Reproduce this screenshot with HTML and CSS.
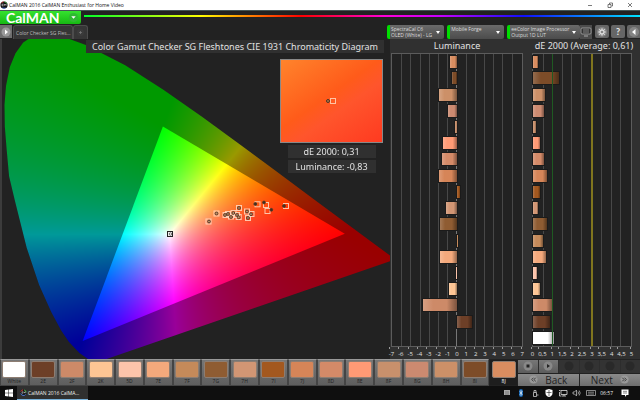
FILE: index.html
```html
<!DOCTYPE html>
<html lang="en">
<head>
<meta charset="utf-8">
<title>CalMAN 2016 CalMAN Enthusiast for Home Video</title>
<link rel="stylesheet" href="styles.css">
</head>
<body>
<div class="titlebar">
  <svg class="app-icon" viewBox="0 0 10 10"><circle cx="5" cy="5" r="4.5" fill="#111"/><path d="M1.5 3a4 4 0 0 1 3-2" stroke="#d33" fill="none"/><path d="M5.500 1a4 4 0 0 1 3 2.500" stroke="#4b4" fill="none"/><path d="M3 8.500a4 4 0 0 0 4 0" stroke="#36d" fill="none"/><path d="M4.500 4H2.500v2h2M5.500 6V4l1 1 1-1v2" stroke="#ddd" stroke-width=".8" fill="none"/></svg>
  <span class="window-name">CalMAN 2016 CalMAN Enthusiast for Home Video</span>
  <button class="win-btn" aria-label="Minimize"><svg viewBox="0 0 6 6"><path d="M1 3.500h4"/></svg></button>
  <button class="win-btn" aria-label="Restore"><svg viewBox="0 0 6 6"><path d="M1 2.500h3v3H1zM2.500 2V1H5.500v3H4.500"/></svg></button>
  <button class="win-btn" aria-label="Close"><svg viewBox="0 0 6 6"><path d="M1 1l4 4M5 1L1 5"/></svg></button>
</div>
<div class="brandbar">
  <button class="brand">CalMAN<span class="brand-drop"><svg viewBox="0 0 10 10"><circle cx="5" cy="5" r="5" fill="#2fb832"/><path d="M2.500 3.500h5L5 6.500z" fill="#fff"/></svg></span></button>
  <div class="spectrum"></div>
</div>
<div class="toolbar">
  <div class="tabs">
    <button class="nav" aria-label="Expand"><svg viewBox="0 0 10 10"><circle cx="5" cy="5" r="4.500" fill="#9a9a9a"/><path d="M4 2.500L7 5 4 7.500z" fill="#fff"/></svg></button>
    <button class="tab">Color Checker SG Fles...</button>
    <button class="tab add" aria-label="Add tab"><svg viewBox="0 0 10 10"><circle cx="5" cy="5" r="4" fill="#3b3b3b"/><path d="M5 3.500v3M3.500 5h3" stroke="#777"/></svg></button>
  </div>
  <div class="sources">
    <button class="source"><span>SpectraCal C6<br>OLED (White) - LG</span><i></i></button>
    <button class="source"><span>Mobile Forge</span><i></i></button>
    <button class="source wide"><span>eeColor Image Processor<br>Output 1D LUT</span><i></i></button>
    <button class="screen" aria-label="Display"><svg viewBox="0 0 12 10"><rect x="1" y="1" width="10" height="6" rx="1" fill="#333" stroke="#aaa" stroke-width=".8"/><path d="M3 3h6M3 5h6" stroke="#888"/><path d="M4 9h4" stroke="#aaa"/></svg></button>
    <button class="round" aria-label="Settings"><svg viewBox="0 0 12 12"><circle cx="6" cy="6" r="5" fill="#858585"/><circle cx="6" cy="6" r="2" fill="none" stroke="#ddd" stroke-width="1.300"/><path d="M6 2v2M6 8v2M2 6h2M8 6h2M3 3l1.500 1.500M7.500 7.500L9 9M9 3L7.500 4.500M4.500 7.500L3 9" stroke="#ddd" stroke-width=".8"/></svg></button>
    <button class="round help">?</button>
    <button class="round" aria-label="Collapse"><svg viewBox="0 0 12 12"><circle cx="6" cy="6" r="5" fill="#858585"/><path d="M7.500 3v6L4 6z" fill="#fff"/></svg></button>
  </div>
</div>
<main class="workspace">
  <section class="stage">
    <canvas id="gamut" width="390" height="320"></canvas>
    <svg id="marks" class="marks" viewBox="0 39 390 320" preserveAspectRatio="none"></svg>
    <h1 class="stage-title">Color Gamut Checker SG Fleshtones CIE 1931 Chromaticity Diagram</h1>
    <div class="detail">
      <div class="patch"><svg viewBox="0 0 14 8"><rect x="5.500" y="1.500" width="5" height="5" fill="none" stroke="#ffc3a4"/><circle cx="3" cy="4" r="1.500" fill="#b5784a" stroke="#4c3524"/></svg></div>
      <p>dE 2000: 0,31</p>
      <p>Luminance: -0,83</p>
    </div>
  </section>
  <section class="charts">
    <div class="chart lum">
      <h2>Luminance</h2>
      <div class="plot" id="lum"></div>
      <div class="axis" id="lum-axis"></div>
    </div>
    <div class="chart de">
      <h2>dE 2000 (Average: 0,61)</h2>
      <div class="plot" id="de"></div>
      <div class="axis" id="de-axis"></div>
    </div>
  </section>
</main>
<div class="bottom">
  <div class="swatches" id="swatches"></div>
  <div class="controls">
    <div class="transport">
      <button class="live" aria-label="Stop"><svg viewBox="0 0 10 10"><circle cx="5" cy="5" r="4.500" fill="#888"/><path d="M3.500 3.500h3v3h-3z" fill="#222"/></svg></button>
      <button class="live" aria-label="Play"><svg viewBox="0 0 10 10"><circle cx="5" cy="5" r="4.500" fill="#888"/><path d="M4 3l3 2-3 2z" fill="#222"/></svg></button>
      <button aria-label="Read"><svg viewBox="0 0 10 10"><circle cx="5" cy="5" r="4.500"/></svg></button>
      <button aria-label="Read series"><svg viewBox="0 0 10 10"><circle cx="5" cy="5" r="4.500"/></svg></button>
      <button aria-label="Continuous"><svg viewBox="0 0 10 10"><circle cx="5" cy="5" r="4.500"/></svg></button>
      <button aria-label="Loop"><svg viewBox="0 0 10 10"><circle cx="5" cy="5" r="4.500"/></svg></button>
    </div>
    <div class="steps">
      <button><svg viewBox="0 0 10 10"><circle cx="5" cy="5" r="4.500" fill="#999"/><path d="M5 3L3 5l2 2M7.500 3l-2 2 2 2" fill="none" stroke="#333"/></svg>Back</button>
      <button>Next<svg viewBox="0 0 10 10"><circle cx="5" cy="5" r="4.500" fill="#999"/><path d="M2.500 3l2 2-2 2M5 3l2 2-2 2" fill="none" stroke="#333"/></svg></button>
    </div>
  </div>
</div>
<footer class="taskbar">
  <button class="start" aria-label="Start"><svg viewBox="0 0 8 8"><path d="M0 1l3.500-.5v3.200H0zM4 .5L8 0v3.700H4zM0 4.200h3.500v3.300L0 7zM4 4.200h4V8l-4-.5z" fill="#fff"/></svg></button>
  <button class="task"><svg viewBox="0 0 8 8"><circle cx="4" cy="4" r="3.500" fill="#111"/><path d="M1 3a3 3 0 0 1 2.500-2" stroke="#e44" fill="none"/><path d="M4.500 1A3 3 0 0 1 7 4" stroke="#5c5" fill="none"/><path d="M1 5a3 3 0 0 0 5.500 1" stroke="#58e" fill="none"/><path d="M3.500 3.200H2.300v1.600h1.200M4.500 4.800V3.200l.7.800.7-.8v1.600" stroke="#eee" stroke-width=".6" fill="none"/></svg>CalMAN 2016 CalMA...</button>
  <div class="tray">
    <svg viewBox="0 0 10 8"><rect x="2" y="1" width="6" height="5" fill="#aaa"/><path d="M3 3h4M3 5h4" stroke="#555" stroke-width=".6"/></svg>
    <svg viewBox="0 0 10 8"><rect x="3" y="0" width="4" height="8" rx="2" fill="#1767b5"/><path d="M3.800 2.500l2.300 2.800L5 6.500v-5l1.100 1.200-2.300 2.800" stroke="#fff" stroke-width=".6" fill="none"/></svg>
    <svg viewBox="0 0 10 8"><path d="M3.500 3.500h3v4h-3zM4 3.500v-2h2v2M7 6h1.500" stroke="#ccc" fill="none" stroke-width=".8"/></svg>
    <svg viewBox="0 0 10 8"><path d="M5 0l3.500 1v3q0 3-3.500 4-3.500-1-3.500-4V1z" fill="#fff"/><path d="M5 1v6M2.500 3.500h5" stroke="#222" stroke-width=".6"/></svg>
    <svg viewBox="0 0 10 8"><path d="M3 1.500h6v4H3zM6 5.500v1.500M4 7h4M1.500 3v4h2M1 1.500h1.500" stroke="#ddd" fill="none" stroke-width=".8"/></svg>
    <svg viewBox="0 0 10 8"><path d="M1 3h1.500l2-2v6l-2-2H1zM6 2.500q1 1.500 0 3M7.200 1.500q2 2.500 0 5" stroke="#ccc" fill="none" stroke-width=".7"/></svg>
    <svg viewBox="0 0 10 8"><path d="M.5 1.500h9v5h-9zM2 3.200h6M2 5h6" stroke="#bbb" fill="none" stroke-width=".7"/></svg>
    <time>06:57</time>
    <svg viewBox="0 0 10 8"><path d="M1.500.5h7v5.500H6.500L5 8V6H1.500z" fill="#fff"/><path d="M3 2.300h4M3 4h4" stroke="#333" stroke-width=".6"/></svg>
  </div>
</footer>
<script src="app.js"></script>
</body>
</html>
```

FILE: styles.css
```css
* { box-sizing: border-box; }
body {
  margin: 0;
  height: 100vh;
  display: flex;
  flex-direction: column;
  background: #222;
  color: #e2e2e2;
  font-family: "Open Sans", "Liberation Sans", sans-serif;
  overflow: hidden;
}
button { border: 0; padding: 0; margin: 0; font: inherit; color: inherit; background: none; }
svg { display: block; }
h1, h2, p { margin: 0; font-weight: 400; font-family: "Noto Sans", sans-serif; }

.titlebar { flex: none; height: 10px; display: flex; align-items: center; background: #fff; color: #111; }
.app-icon { width: 8px; height: 8px; }
.window-name { flex: 1; font-size: 5px; line-height: 10px; padding-left: 1px; white-space: nowrap; }
.win-btn { width: 20px; display: flex; justify-content: center; }
.win-btn svg { width: 6px; height: 6px; fill: none; stroke: #444; stroke-width: 0.7; }

.brandbar { flex: none; height: 15px; display: flex; align-items: flex-start; border-top: 1px solid #455; }
.brand {
  width: 81px; height: 13px; padding: 0 3px 0 6px;
  display: flex; align-items: center; justify-content: space-between;
  background: linear-gradient(#35e22f, #17b813); color: #fff;
  font: 700 14px/13px Lato, sans-serif; border-radius: 0 0 2px 0;
}
.brand-drop svg { width: 9px; height: 9px; }
.spectrum {
  flex: 1; height: 2px; margin: 4px 0 0 3px;
  background: linear-gradient(90deg, #00ff2a, #ffff00 21%, #ff0000 39%, #ff00d8 54%, #c800ff 64%, #1010ff 79%, #00e4ff);
}

.toolbar { flex: none; height: 14px; display: grid; grid-template-columns: 384fr 256fr; }
.tabs, .sources { display: flex; min-width: 0; }
.nav { width: 12px; height: 13px; background: #6e6e6e; display: flex; align-items: center; justify-content: center; }
.nav svg { width: 10px; height: 10px; }
.tab { height: 14px; padding: 0 2px; margin-left: 1px; border: 1px solid #4c4c4c; border-bottom: 0; border-radius: 3px 3px 0 0; background: #363636; color: #bbb; font-size: 5px; line-height: 12px; width: 60px; white-space: nowrap; }
.add { width: 15px; margin-left: 0; display: flex; align-items: center; justify-content: center; }
.add svg { width: 9px; height: 9px; }
.sources { padding-left: 3px; gap: 3px; }
.source {
  flex: 57 1 0; min-width: 0; height: 14px; display: flex; align-items: center; justify-content: space-between;
  border-left: 3px solid #0d0; border-radius: 2px; background: linear-gradient(#6a6a6a, #4c4c4c);
  text-align: left; color: #ddd; padding: 0 4px 0 1px; font-size: 5px; line-height: 6px; white-space: nowrap;
}
.source span { align-self: flex-start; padding-top: 1px; }
.source i { border: 2px solid transparent; border-top: 3px solid #fff; border-bottom: 0; flex: none; }
.source.wide { flex: 75 1 0; }
.screen { width: 12px; margin-left: -3px; display: flex; align-items: center; background: #4c4c4c; height: 14px; }
.screen svg { width: 12px; height: 10px; }
.round { width: 14px; height: 13px; border-radius: 2px; background: #666; display: flex; align-items: center; justify-content: center; flex: none; margin-right: -1px; }
.round svg { width: 12px; height: 12px; }
.help { font: 700 9px/12px Lato, sans-serif; color: #eee; }

.workspace { flex: 1; min-height: 0; display: grid; grid-template-columns: 390fr 250fr; }
.stage { position: relative; min-width: 0; min-height: 0; overflow: hidden; border-left: 2px solid #3c3c3c; }
.stage canvas, .marks { position: absolute; inset: 0 0 0 -2px; width: calc(100% + 2px); height: 100%; }
.stage-title { position: absolute; top: 1px; right: 6px; padding: 0 6px; background: #303030; font-size: 9px; line-height: 13px; white-space: nowrap; }
.detail { position: absolute; top: 20px; right: 7px; width: 103px; display: flex; flex-direction: column; align-items: center; gap: 2px; }
.patch { align-self: stretch; height: 84px; border: 1px solid #888; background: linear-gradient(145deg, #ff842c, #ff5b1a 45%, #ff552c 60%, #ff3a20); display: flex; align-items: center; justify-content: center; }
.patch svg { width: 14px; height: 8px; }
.detail p { width: 88px; background: #303030; font-size: 9px; line-height: 13px; text-align: center; white-space: nowrap; }

.charts { min-width: 0; min-height: 0; background: #303030; display: grid; grid-template-columns: 132fr 100fr; gap: 9px; padding: 0 8px 0 1px; }
.chart { min-width: 0; display: flex; flex-direction: column; }
.chart h2 { font-size: 9px; line-height: 14px; text-align: center; white-space: nowrap; }
.de h2 { margin: 0 -6px 0 -2px; }
.plot { flex: 1; min-height: 0; position: relative; background: #222; border: 1px solid #5c5c5c; display: flex; flex-direction: column; }
.rules { position: absolute; inset: 0; display: flex; justify-content: space-between; }
.rules span { width: 1px; background: #484848; }
.rules .edge { visibility: hidden; }
.rules .zero { background: #777; }
.rules .good { position: relative; z-index: 1; background: #1f5a22; }
.rules .limit { width: 2px; background: #80751e; }
.row { flex: 1; display: flex; align-items: center; position: relative; }
.bar { height: 12px; box-shadow: 0 0 0 1px #1b1b1b; flex: none; }
.axis { height: 12px; display: flex; justify-content: space-between; font-size: 6px; line-height: 14px; }
.axis span { width: 1px; display: flex; justify-content: center; white-space: nowrap; }
.axis span::before { content: ""; width: 1px; height: 2px; flex: none; background: #999; margin-right: -1px; }

.bottom { flex: none; height: 27px; display: grid; grid-template-columns: 518fr 122fr; background: #222; }
.swatches { display: flex; min-width: 0; }
.swatch { flex: 1; min-width: 0; display: flex; flex-direction: column; align-items: center; background: linear-gradient(#777, #5e5e5e); border: 1px solid #444; border-top-color: #999; padding-top: 1px; font-size: 5px; line-height: 7px; color: #222; }
.swatch i { width: 24px; height: 17px; border-radius: 2px; border: 1px solid #8d7d72; }
.swatch.active { background: #1e1e1e; color: #fff; border-color: #222; }
.controls { display: flex; flex-direction: column; gap: 1px; padding-top: 1px; min-width: 0; }
.transport { flex: 1; display: flex; gap: 1px; background: #2d2d2d; }
.transport button { flex: 1; display: flex; align-items: center; justify-content: center; background: #333; }
.transport .live { background: linear-gradient(#777, #5c5c5c); }
.transport svg { width: 10px; height: 10px; fill: #292929; }
.steps { flex: 1; display: flex; gap: 1px; }
.steps button { flex: 1; display: flex; align-items: center; justify-content: center; gap: 7px; background: linear-gradient(#8b8b8b, #6e6e6e); color: #222; font-size: 10px; line-height: 12px; }
.steps svg { width: 9px; height: 9px; }

.taskbar { flex: none; height: 14px; display: flex; background: #0f0f0f; color: #eee; font-size: 5px; line-height: 12px; }
.start { width: 17px; display: flex; align-items: center; justify-content: center; }
.start svg { width: 8px; height: 8px; }
.task { width: 71px; display: flex; align-items: center; gap: 1px; padding-left: 3px; background: #303030; border-bottom: 1px solid #79b3dc; white-space: nowrap; }
.task svg { width: 7px; height: 7px; }
.tray { margin-left: auto; display: flex; align-items: center; gap: 4px; padding-right: 10px; }
.tray svg { width: 10px; height: 8px; }
.tray time { margin-right: 3px; }
```

FILE: app.js
```js
const patches = [
  // name, colour, luminance error, dE 2000
  ["8J", "#d98d60", -0.75, 0.28],
  ["8I", "#7d4c28", -0.5, 1.31],
  ["8H", "#cc9068", -1.95, 0.63],
  ["8G", "#cc8a70", -1, 0.58],
  ["8F", "#c8906c", -0.25, 0.17],
  ["8E", "#ff9a75", -1.5, 0.38],
  ["8D", "#d48a68", -1.65, 0.57],
  ["7J", "#d68558", -1.95, 0.72],
  ["7I", "#a3581f", 0.35, 0.38],
  ["7H", "#d29674", -1.2, 0.28],
  ["7G", "#8f5c32", -1.8, 0.7],
  ["7F", "#c58a5a", 0.15, 0.5],
  ["7E", "#f4a97c", -1.8, 0.64],
  ["5D", "#fcc4ab", -0.15, 0.22],
  ["2K", "#fdc594", -0.9, 0.35],
  ["2F", "#cd8a68", -3.65, 0.96],
  ["2E", "#6d3f27", 1.6, 0.86],
  ["White", "#ffffff", 0, 1.08]
];

function buildChart(id, min, max, step, valueIndex) {
  const plot = document.getElementById(id);
  const axis = document.getElementById(id + "-axis");
  let rules = "";
  let labels = "";
  for (let v = min; v <= max; v += step) {
    let cls = "";
    if (v === min || v === max) cls = "edge";
    else if (v === 0) cls = "zero";
    else if (id === "de" && v === 1) cls = "good";
    else if (id === "de" && v === 3) cls = "limit";
    rules += `<span class="${cls}"></span>`;
    labels += `<span>${String(v).replace(".", ",")}</span>`;
  }
  const range = max - min;
  const rows = patches.map(p => {
    const v = p[valueIndex];
    if (v === 0) return `<div class="row"></div>`;
    const left = (Math.min(v, 0) - min) / range * 100;
    const width = Math.abs(v) / range * 100;
    const shade = `linear-gradient(90deg, color-mix(in srgb, ${p[1]}, #fff 18%), ${p[1]} 30%, ${p[1]} 70%, color-mix(in srgb, ${p[1]}, #000 40%))`;
    return `<div class="row"><div class="bar" style="margin-left:${left}%;width:${width}%;background:${shade}"></div></div>`;
  }).join("");
  plot.innerHTML = `<div class="rules">${rules}</div>${rows}`;
  axis.innerHTML = labels;
}
buildChart("lum", -7, 7, 1, 2);
buildChart("de", 0, 5, 0.5, 3);

document.getElementById("swatches").innerHTML = patches.slice().reverse().map(p =>
  `<button class="swatch${p[0] === "8J" ? " active" : ""}"><i style="background:${p[1]}"></i>${p[0]}</button>`
).join("");

// Chromaticity diagram: xy plane mapped to canvas pixels
const locus = [[.1741,.005],[.1714,.0051],[.1644,.0109],[.1566,.0177],[.144,.0297],[.1241,.0578],[.1096,.0868],[.0913,.1327],[.0687,.2007],[.0454,.295],[.0235,.4127],[.0125,.475],[.0082,.5384],[.0045,.6],[.0039,.6548],[.0068,.703],[.0139,.7502],[.0245,.785],[.0389,.812],[.056,.827],[.0743,.8338],[.1142,.8262],[.1547,.8059],[.2296,.7543],[.3016,.6923],[.3731,.6245],[.4441,.5547],[.5125,.4866],[.5752,.4242],[.627,.3725],[.6915,.3083],[.7347,.2653]];
const triangle = [[.64, .33], [.3, .6], [.15, .06]];
const WIDTH = 390, HEIGHT = 320;
const SX = 535, SY = 397, X0 = 2.4, Y0 = 325.8;

function colourField(level) {
  const c = document.createElement("canvas");
  c.width = WIDTH;
  c.height = HEIGHT;
  const g = c.getContext("2d");
  const img = g.createImageData(WIDTH, HEIGHT);
  for (let py = 0; py < HEIGHT; py++) {
    for (let px = 0; px < WIDTH; px++) {
      const x = (px + .5 - X0) / SX;
      const y = (Y0 - py - .5) / SY;
      const z = 1 - x - y;
      const rgb = [
        3.2406 * x - 1.5372 * y - .4986 * z,
        -.9689 * x + 1.8758 * y + .0415 * z,
        .0557 * x - .204 * y + 1.057 * z
      ].map(v => Math.max(0, v));
      const m = Math.max(...rgb);
      const o = (py * WIDTH + px) * 4;
      for (let k = 0; k < 3; k++) img.data[o + k] = 255 * level * rgb[k] / m;
      img.data[o + 3] = 255;
    }
  }
  g.putImageData(img, 0, 0);
  return c;
}

const ctx = document.getElementById("gamut").getContext("2d");
function paint(points, level) {
  ctx.save();
  ctx.beginPath();
  points.forEach(([x, y]) => ctx.lineTo(X0 + x * SX, Y0 - y * SY));
  ctx.closePath();
  ctx.clip();
  ctx.drawImage(colourField(level), 0, 0);
  ctx.restore();
}
paint(locus, .6);
paint(triangle, 1);

const targets = [[208.500,221.500],[216.500,213.500],[225.500,215],[228,214],[231,216.500],[233.500,213],[237,215],[239,208],[238.700,217],[247,211.500],[251.500,214],[248,218],[257.500,204.300],[266,205],[267.500,211],[286,206]];
const readings = [[209,221.500],[216.500,213.500],[225,215],[228,214],[231,217],[233.300,213],[237,215],[239,208],[238.700,217.300],[247,211.500],[251,214.200],[248,218],[255.300,204],[264,202.500],[271.300,209.800],[284,206]];
document.getElementById("marks").innerHTML =
  targets.map(([x, y]) => `<rect x="${x - 2.5}" y="${y - 2.5}" width="5" height="5" fill="none" stroke="#ffdcc4" stroke-opacity=".85"/>`).join("") +
  readings.map(([x, y], i) => `<circle cx="${x}" cy="${y}" r="1.400" fill="${i > 11 ? "#4a2a18" : "#c89068"}" stroke="#4a3a2a" stroke-width=".9"/>`).join("") +
  `<rect x="167.500" y="231.500" width="5" height="5" fill="#eee" stroke="#222"/><circle cx="170.500" cy="234" r="1.200" fill="#fff" stroke="#444" stroke-width=".7"/>`;
```
